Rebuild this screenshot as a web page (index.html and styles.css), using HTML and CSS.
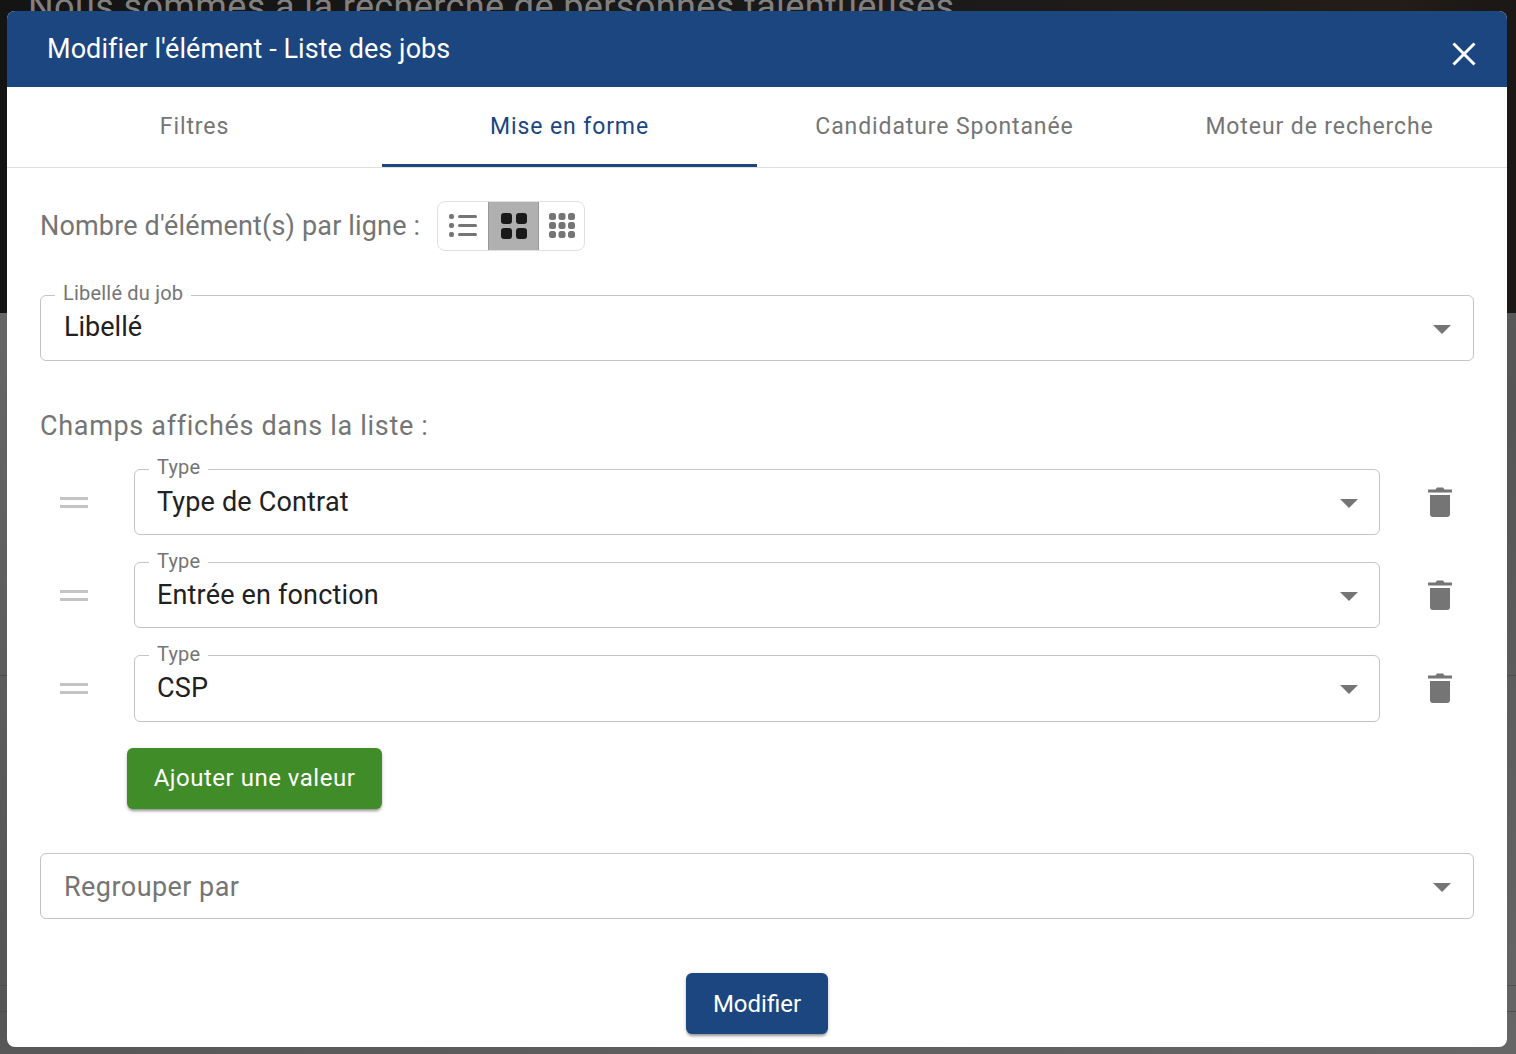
FILE: index.html
```html
<!DOCTYPE html>
<html lang="fr">
<head>
<meta charset="utf-8">
<title>Modifier l'élément</title>
<link rel="stylesheet" href="styles.css">
</head>
<body>
<div class="backdrop">
  <div class="hero"><p class="hero-text">Nous sommes à la recherche de personnes talentueuses</p></div>
  <div class="page-line line-a"></div>
  <div class="page-line line-b"></div>
  <div class="page-line line-c"></div>
</div>
<section class="modal">
  <header class="modal-head">
    <h1 class="modal-title">Modifier l'élément - Liste des jobs</h1>
    <svg class="close" viewBox="0 0 24 24" width="24" height="24"><path d="M1.500 1.500L22.500 22.500M22.500 1.500L1.500 22.500" stroke="#fff" stroke-width="3" fill="none"/></svg>
  </header>
  <nav class="tabs">
    <div class="tab">Filtres</div>
    <div class="tab active">Mise en forme</div>
    <div class="tab">Candidature Spontanée</div>
    <div class="tab">Moteur de recherche</div>
  </nav>
  <div class="modal-body">
    <div class="per-line">
      <span class="section-label">Nombre d'élément(s) par ligne :</span>
      <div class="toggle">
        <div class="toggle-btn">
          <svg viewBox="0 0 28 24" width="28" height="24"><g fill="#757575"><rect x="0" y="0" width="5" height="5" rx="2"/><rect x="0" y="9" width="5" height="5" rx="2"/><rect x="0" y="18" width="5" height="5" rx="2"/><rect x="9" y="1" width="19" height="3" rx="1.500"/><rect x="9" y="10" width="19" height="3" rx="1.500"/><rect x="9" y="19" width="19" height="3" rx="1.500"/></g></svg>
        </div>
        <div class="toggle-btn selected">
          <svg viewBox="0 0 26 26" width="26" height="26"><g fill="#1a1a1a"><rect x="0" y="0" width="11" height="11" rx="3"/><rect x="15" y="0" width="11" height="11" rx="3"/><rect x="0" y="15" width="11" height="11" rx="3"/><rect x="15" y="15" width="11" height="11" rx="3"/></g></svg>
        </div>
        <div class="toggle-btn last">
          <svg viewBox="0 0 26 26" width="26" height="26"><g fill="#757575"><rect x="0" y="0" width="7" height="7" rx="2.500"/><rect x="9.500" y="0" width="7" height="7" rx="2.500"/><rect x="19" y="0" width="7" height="7" rx="2.500"/><rect x="0" y="9" width="7" height="7" rx="2.500"/><rect x="9.500" y="9" width="7" height="7" rx="2.500"/><rect x="19" y="9" width="7" height="7" rx="2.500"/><rect x="0" y="18" width="7" height="7" rx="2.500"/><rect x="9.500" y="18" width="7" height="7" rx="2.500"/><rect x="19" y="18" width="7" height="7" rx="2.500"/></g></svg>
        </div>
      </div>
    </div>

    <div class="field field-job">
      <span class="float-label">Libellé du job</span>
      <span class="value">Libellé</span>
      <span class="caret"></span>
    </div>

    <div class="section-label fields-title">Champs affichés dans la liste :</div>

    <div class="rows">
      <div class="row">
        <span class="drag"></span>
        <div class="field field-row"><span class="float-label">Type</span><span class="value">Type de Contrat</span><span class="caret"></span></div>
        <svg class="trash" viewBox="0 0 24 32" width="24" height="32"><path fill="#757575" d="M0 6.500h24V3.500H16.500L15 1.500H9L7.500 3.500H0zM2 9h20v19a3 3 0 0 1-3 3H5a3 3 0 0 1-3-3z"/></svg>
      </div>
      <div class="row">
        <span class="drag"></span>
        <div class="field field-row"><span class="float-label">Type</span><span class="value">Entrée en fonction</span><span class="caret"></span></div>
        <svg class="trash" viewBox="0 0 24 32" width="24" height="32"><path fill="#757575" d="M0 6.500h24V3.500H16.500L15 1.500H9L7.500 3.500H0zM2 9h20v19a3 3 0 0 1-3 3H5a3 3 0 0 1-3-3z"/></svg>
      </div>
      <div class="row">
        <span class="drag"></span>
        <div class="field field-row"><span class="float-label">Type</span><span class="value">CSP</span><span class="caret"></span></div>
        <svg class="trash" viewBox="0 0 24 32" width="24" height="32"><path fill="#757575" d="M0 6.500h24V3.500H16.500L15 1.500H9L7.500 3.500H0zM2 9h20v19a3 3 0 0 1-3 3H5a3 3 0 0 1-3-3z"/></svg>
      </div>
    </div>

    <button class="btn btn-add" type="button">Ajouter une valeur</button>

    <div class="field field-group">
      <span class="value placeholder">Regrouper par</span>
      <span class="caret"></span>
    </div>

    <div class="actions"><button class="btn btn-save" type="button">Modifier</button></div>
  </div>
</section>
</body>
</html>
```

FILE: styles.css
```css
* { box-sizing: border-box; }
html, body { margin: 0; height: 100%; }
body {
  width: 1516px;
  height: 1054px;
  overflow: hidden;
  background: #5f5f5f;
  font-family: Roboto, "Liberation Sans", sans-serif;
  position: relative;
}
.backdrop { position: absolute; inset: 0; background: linear-gradient(160deg, #6e6e6e 0%, #555 60%, #666 100%); }
.hero {
  height: 313px;
  overflow: hidden;
  background: linear-gradient(90deg, #141414 0%, #1a1a1a 60%, #241c18 92%, #1a1715 100%);
}
.hero-text {
  margin: -13px 0 0 28px;
  font-size: 36px;
  line-height: 40px;
  letter-spacing: 0.38px;
  color: #808080;
  white-space: nowrap;
}
.page-line { position: absolute; left: 0; right: 0; height: 1px; background: #4d4d4d; }
.line-a { top: 675px; }
.line-b { top: 985px; }
.line-c { top: 1011px; }
.modal {
  position: absolute;
  left: 7px;
  top: 11px;
  width: 1500px;
  height: 1036px;
  background: #fff;
  border-radius: 8px;
  overflow: hidden;
}
.modal-head {
  height: 76px;
  background: #1b467f;
  display: flex;
  align-items: flex-start;
  justify-content: space-between;
  padding: 22px 31px 0 40px;
}
.modal-title { margin: 0; font-size: 27px; line-height: 32px; font-weight: 400; color: #fff; letter-spacing: 0.06px; }
.close { margin-top: 9px; }
.tabs { display: grid; grid-template-columns: repeat(4, 375px); height: 81px; border-bottom: 1px solid #e0e0e0; }
.tab {
  font-size: 23px;
  letter-spacing: 0.9px;
  color: #757575;
  text-align: center;
  line-height: 80px;
  height: 80px;
}
.tab.active { color: #1b467f; border-bottom: 3px solid #1b467f; }
.modal-body { padding: 33px 33px 0; }
.per-line { display: flex; align-items: center; height: 50px; gap: 17px; }
.section-label { font-size: 27px; line-height: 32px; color: #757575; letter-spacing: 0.16px; }
.toggle { display: flex; height: 50px; width: 148px; border: 1px solid #e0e0e0; border-radius: 8px; overflow: hidden; }
.toggle-btn { flex: none; width: 50px; display: flex; align-items: center; justify-content: center; }
.toggle-btn.selected { width: 51px; background: #b0b0b0; border-left: 1px solid #999; border-right: 1px solid #999; }
.toggle-btn.last { width: 45px; }
.field {
  position: relative;
  border: 1px solid #c4c4c4;
  border-radius: 6px;
  height: 66px;
  display: flex;
  align-items: center;
  padding: 0 23px;
}
.field-job { margin-top: 44px; }
.float-label {
  position: absolute;
  left: 14px;
  top: -15px;
  padding: 0 8px;
  background: #fff;
  font-size: 20px;
  line-height: 24px;
  letter-spacing: 0.2px;
  color: #757575;
}
.value { font-size: 27px; line-height: 32px; color: #212121; margin-top: -3px; }
.placeholder { color: #757575; margin-top: 3px; letter-spacing: 0.45px; }
.caret {
  position: absolute;
  right: 22px;
  top: 29px;
  border-left: 9px solid transparent;
  border-right: 9px solid transparent;
  border-top: 9px solid #757575;
}
.fields-title { margin-top: 49px; letter-spacing: 0.68px; }
.rows { display: flex; flex-direction: column; gap: 27px; margin-top: 27px; }
.row { display: flex; align-items: center; }
.drag { width: 28px; height: 11px; margin-left: 20px; border-top: 3px solid #c4c4c4; border-bottom: 3px solid #c4c4c4; flex: none; }
.field-row { flex: none; width: 1246px; height: 66.2px; margin-left: 46px; padding-left: 22px; }
.field-row .float-label { top: -14.6px; }
.field-row .value { margin-top: -1px; letter-spacing: 0.17px; }
.field-row .caret { right: 21px; }
.trash { flex: none; margin-left: 48px; }
.btn { border: 0; border-radius: 6px; font-family: inherit; font-size: 24px; color: #fff; box-shadow: 0 3px 3px -1px rgba(0,0,0,.35), 0 1px 4px rgba(0,0,0,.15); display: block; padding: 0; }
.btn-add { margin: 26.4px 0 0 87px; width: 255px; height: 61px; background: #3f8c28; letter-spacing: 0.5px; }
.field-group { margin-top: 44px; }
.actions { display: flex; justify-content: center; margin-top: 54px; }
.btn-save { width: 142px; height: 61px; padding-top: 1px; background: #1b467f; }
```
